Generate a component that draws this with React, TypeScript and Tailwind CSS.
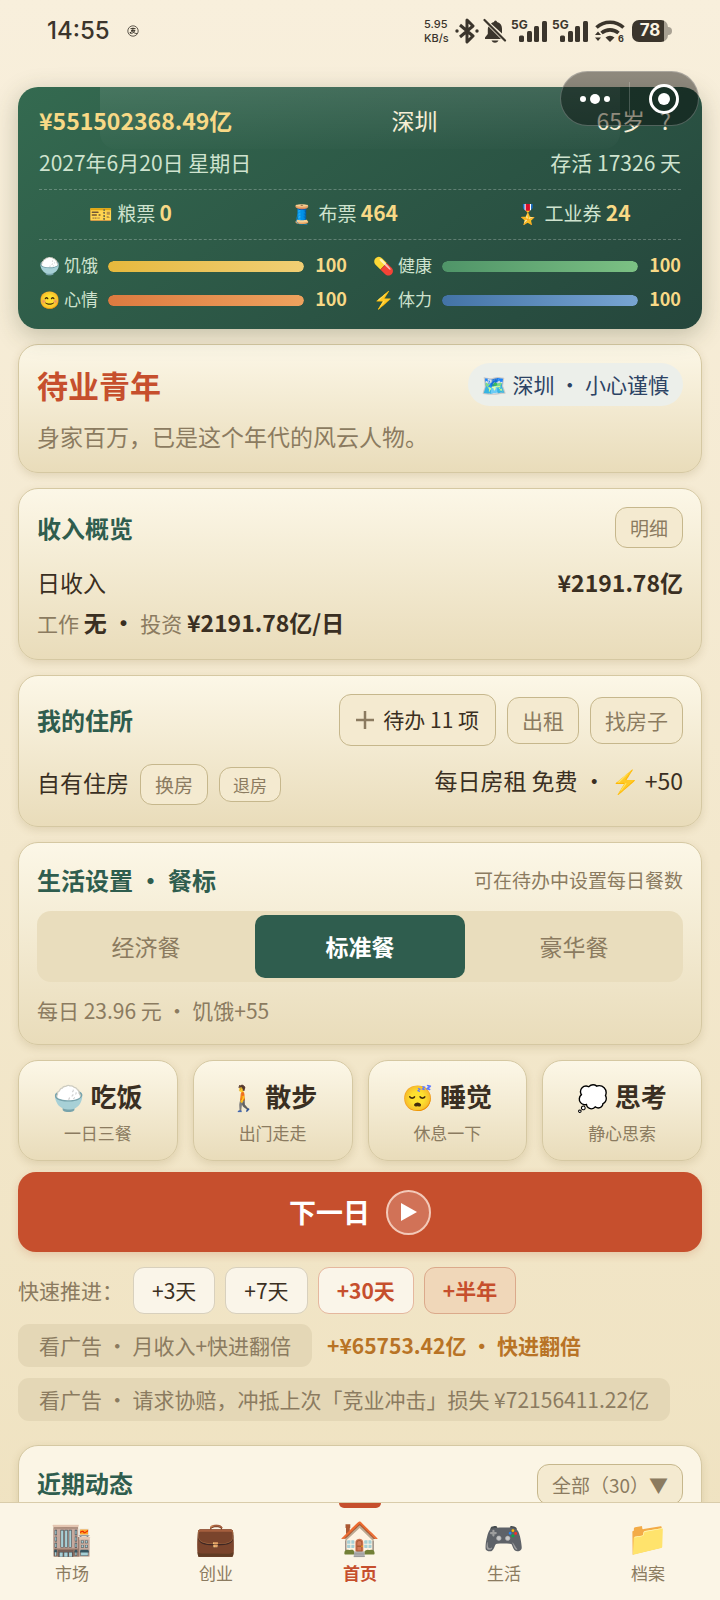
import type { ReactNode } from "react";
import clsx from "clsx";

const tickets = [
  { icon: "🎫", label: "粮票", value: 0 },
  { icon: "🧵", label: "布票", value: 464 },
  { icon: "🎖️", label: "工业券", value: 24 },
];

const stats = [
  { icon: "🍚", label: "饥饿", value: 100, bar: "from-[#e6b93c] to-[#f0cf74]" },
  { icon: "💊", label: "健康", value: 100, bar: "from-[#4f9468] to-[#7cc184]" },
  { icon: "😊", label: "心情", value: 100, bar: "from-[#dc7a40] to-[#eda25e]" },
  { icon: "⚡", label: "体力", value: 100, bar: "from-[#4373a6] to-[#78a5d2]" },
];

const meals = ["经济餐", "标准餐", "豪华餐"];

const actions = [
  { icon: "🍚", label: "吃饭", hint: "一日三餐" },
  { icon: "🚶", label: "散步", hint: "出门走走" },
  { icon: "😴", label: "睡觉", hint: "休息一下" },
  { icon: "💭", label: "思考", hint: "静心思索" },
];

const skips = [
  { label: "+3天", style: "border-[#d8d0bd] bg-[#faf5e9] text-[#3a2f22]" },
  { label: "+7天", style: "border-[#d8d0bd] bg-[#faf5e9] text-[#3a2f22]" },
  { label: "+30天", style: "border-[#e5b79e] bg-[#faf5e9] font-bold text-[#c64f2d]" },
  { label: "+半年", style: "border-[#dba98b] bg-[#f0d7b9] font-bold text-[#c64f2d]" },
];

const tabs = [
  { icon: "🏬", label: "市场" },
  { icon: "💼", label: "创业" },
  { icon: "🏠", label: "首页" },
  { icon: "🎮", label: "生活" },
  { icon: "📁", label: "档案" },
];

function Signal() {
  return (
    <div className="relative h-6 w-9">
      <span className="absolute left-0 top-0 font-[Inter] text-[12px] leading-none font-bold">5G</span>
      <svg viewBox="0 0 36 24" className="h-6 w-9" fill="currentColor">
        <rect x="8" y="16.500" width="5" height="6.500" rx="1.500" />
        <rect x="16" y="12" width="5" height="11" rx="1.500" />
        <rect x="23" y="7" width="5" height="16" rx="1.500" />
        <rect x="31" y="2" width="5" height="21" rx="1.500" />
      </svg>
    </div>
  );
}

function StatusBar() {
  return (
    <header className="flex h-[62px] items-center justify-between pr-[48px] pl-[47px] text-[#3b352c]">
      <div className="flex items-center gap-[17px]">
        <span className="font-[Inter] text-[24px] leading-none font-medium">14:55</span>
        <svg viewBox="0 0 12 12" className="size-3" fill="none" stroke="currentColor" strokeWidth="0.8">
          <circle cx="6" cy="6" r="5.2" />
          <path d="M3.5 3.6h5M4 5.4h4M6 2.6c0 3-1 4.6-3.2 5.2C4 9 7 8 8 5.4M5.5 6c1 1.600 2.500 2.400 4.500 2.800" strokeWidth="1" />
        </svg>
      </div>
      <div className="flex items-center">
        <div className="w-[31px] font-[Inter] text-[11px] leading-[14px] font-medium">
          <div>5.95</div>
          <div>KB/s</div>
        </div>
        <svg viewBox="0 0 24 26" className="h-[26px] w-6" fill="none" stroke="currentColor" strokeWidth="3">
          <path d="M5 7 18 18l-6 6V2l6 6L5 19" strokeLinejoin="round" />
          <circle cx="2" cy="13" r="1.700" fill="currentColor" stroke="none" />
          <circle cx="22" cy="13" r="1.700" fill="currentColor" stroke="none" />
        </svg>
        <svg viewBox="0 0 24 26" className="mr-1 ml-1 h-[26px] w-6" fill="currentColor">
          <path d="M8 5.500c1-.8 2-1.200 3-1.400a1.500 1.500 0 0 1 3 0c3.500.8 5 3.500 5 7v4.500zM5.500 8.500 18 21H2v-1.600l2.800-3.400v-5c0-.9.3-1.800.7-2.500zM8.500 22.500h7c-.8 1.600-2 2.200-3.500 2.200s-2.700-.6-3.500-2.200z" />
          <path d="M1.500 2 22 22.500" stroke="currentColor" strokeWidth="2.200" strokeLinecap="round" />
        </svg>
        <div className="flex gap-[5px]">
          <Signal />
          <Signal />
        </div>
        <svg viewBox="0 0 30 24" className="ml-[7px] h-6 w-[30px]" fill="none" stroke="currentColor" strokeWidth="3.600">
          <path d="M1.500 8.500a20 20 0 0 1 27 0" />
          <path d="M6.500 14a13 13 0 0 1 17 0" />
          <path d="M10.500 18.500a7 7 0 0 1 9 0L15 23z" fill="currentColor" stroke="none" />
          <path d="M0 16l3-3.500L6 16zM0 18.500h6L3 22z" fill="currentColor" stroke="none" />
          <text x="23" y="23" className="font-[Inter] text-[9px] font-bold" fill="currentColor" stroke="none">6</text>
        </svg>
        <div className="ml-[7px] flex items-center">
          <div className="flex h-[22px] w-9 items-center justify-center overflow-hidden rounded-[7px] bg-linear-to-r from-[#3b352c] from-88% to-[#a8a193] to-88% font-[Inter] text-[17px] font-bold text-[#faf3e3]">
            78
          </div>
          <div className="h-2 w-1 rounded-r-full bg-[#a8a193]" />
        </div>
      </div>
    </header>
  );
}

// mini-program menu floating over the header card
function Capsule() {
  return (
    <div className="absolute top-[71px] right-[21px] z-10 flex h-[55px] w-[139px] items-center rounded-full border border-white/25 bg-black/42">
      <button aria-label="更多" className="flex h-full flex-1 items-center justify-center gap-1">
        <span className="size-[6px] rounded-full bg-white" />
        <span className="size-[10px] rounded-full bg-white" />
        <span className="size-[6px] rounded-full bg-white" />
      </button>
      <span className="h-[33px] w-px bg-white/20" />
      <button aria-label="关闭" className="flex h-full flex-1 items-center justify-center">
        <span className="flex size-[30px] items-center justify-center rounded-full border-[3px] border-white">
          <span className="size-3 rounded-full bg-white" />
        </span>
      </button>
    </div>
  );
}

function HeaderCard() {
  return (
    <section className="relative rounded-[20px] bg-linear-145 from-[#346a50] to-[#25463c] px-[21px] pt-[15px] pb-3 text-[#cfe3cf] shadow-[0_6px_24px_rgba(60,70,40,0.28)]">
      <div className="absolute top-0 right-[12%] left-[12%] h-[62px] rounded-b-[16px] bg-linear-to-b from-white/10 to-white/1" />
      <div className="relative flex items-center justify-between text-[23px] leading-9 text-[#f6eed6]">
        <strong className="text-[#f8d986]">¥551502368.49亿</strong>
        <span>深圳</span>
        <span className="flex gap-[15px] pr-[10px]">
          <span>65岁</span>
          <button aria-label="帮助">?</button>
        </span>
      </div>
      <div className="relative mt-1 flex items-center justify-between text-[21px] leading-10">
        <span>2027年6月20日 星期日</span>
        <span>存活 17326 天</span>
      </div>
      <div className="mt-[7px] flex h-[51px] items-center justify-around gap-[18px] border-y border-dashed border-white/25 pb-1 text-[19px]">
        {tickets.map((x) => (
          <span key={x.label}>
            {x.icon} {x.label} <b className="text-[21px] text-[#f8d986]">{x.value}</b>
          </span>
        ))}
      </div>
      <div className="mt-[9px] grid grid-cols-2 gap-x-[26px]">
        {stats.map((s) => (
          <div key={s.label} className="flex h-[34px] items-center text-[17px]">
            <span className="w-[69px] pb-[3px] whitespace-nowrap">
              {s.icon} {s.label}
            </span>
            <div className="h-[11px] flex-1 overflow-hidden rounded-full bg-black/20">
              <div className={clsx("h-full rounded-full bg-linear-to-r", s.bar)} style={{ width: `${s.value}%` }} />
            </div>
            <b className="w-[43px] pb-[3px] text-right text-[18px] text-[#f8d986]">{s.value}</b>
          </div>
        ))}
      </div>
    </section>
  );
}

function Card({ children }: { children: ReactNode }) {
  return (
    <section className="rounded-[20px] border border-[#d5c8a2] bg-linear-to-b from-[#fcf7e7] to-[#e9dcba] p-[18px] shadow-[0_3px_8px_rgba(120,95,40,0.16)]">
      {children}
    </section>
  );
}

function Title({ children }: { children: ReactNode }) {
  return <h2 className="text-[24px] leading-[38px] font-bold text-[#2f5d4e]">{children}</h2>;
}

function Chip({ size, children }: { size: "sm" | "md" | "lg"; children: ReactNode }) {
  return (
    <button
      className={clsx(
        "rounded-[12px] border border-[#c6b78c] bg-[#f4ead0] text-[#8b7b60]",
        size === "sm" && "h-[35px] px-[13px] text-[17px] leading-[33px]",
        size === "md" && "h-[41px] px-[14px] text-[19px] leading-[39px]",
        size === "lg" && "h-[47px] px-[14px] text-[21px] leading-[45px]",
      )}
    >
      {children}
    </button>
  );
}

export default function App() {
  return (
    <div
      lang="zh-CN"
      className="relative flex h-screen flex-col overflow-hidden bg-linear-to-b from-[#f8efdc] to-[#efe2c0] font-['Noto_Sans_CJK_SC','Noto_Color_Emoji',sans-serif] text-[#3a2f22]"
    >
      <StatusBar />
      <Capsule />
      <main className="flex min-h-0 flex-1 flex-col overflow-hidden px-[18px] pt-[25px]">
        <div className="flex shrink-0 flex-col gap-[15px]">
          <HeaderCard />

          <Card>
            <div className="flex items-center justify-between">
              <h1 className="text-[31px] leading-[43px] font-bold text-[#c64f2d]">待业青年</h1>
              <span className="rounded-full bg-[#ecefea] px-[14px] text-[21px] leading-[43px] text-[#2c4364]">🗺️ 深圳 · 小心谨慎</span>
            </div>
            <p className="mt-3 text-[23px] leading-9 text-[#8b7b60]">身家百万，已是这个年代的风云人物。</p>
          </Card>

          <Card>
            <div className="flex items-center justify-between">
              <Title>收入概览</Title>
              <Chip size="md">明细</Chip>
            </div>
            <div className="mt-4 flex justify-between text-[23px] leading-9">
              <span>日收入</span>
              <b>¥2191.78亿</b>
            </div>
            <p className="mt-1 text-[21px] leading-9 text-[#8b7b60]">
              工作 <b className="text-[23px] text-[#3a2f22]">无 · </b>投资 <b className="text-[23px] text-[#3a2f22]">¥2191.78亿/日</b>
            </p>
          </Card>

          <Card>
            <div className="flex items-center justify-between">
              <Title>我的住所</Title>
              <div className="flex items-center gap-[11px]">
                <button className="flex h-[52px] items-center gap-[9px] rounded-[12px] border border-[#c6b78c] bg-[#f4ead0] px-4 text-[21px]">
                  <svg viewBox="0 0 18 18" className="size-[18px] text-[#8b7b60]" stroke="currentColor" strokeWidth="2.500">
                    <path d="M9 0v18M0 9h18" />
                  </svg>
                  待办 11 项
                </button>
                <Chip size="lg">出租</Chip>
                <Chip size="lg">找房子</Chip>
              </div>
            </div>
            <div className="mt-[18px] flex items-start justify-between pb-[3px] text-[23px] leading-8">
              <div className="flex items-center gap-[11px]">
                <span className="self-start leading-9">自有住房</span>
                <Chip size="md">换房</Chip>
                <Chip size="sm">退房</Chip>
              </div>
              <span>每日房租 免费 · ⚡ +50</span>
            </div>
          </Card>

          <Card>
            <div className="flex items-center justify-between">
              <Title>生活设置 · 餐标</Title>
              <span className="text-[19px] text-[#8b7b60]">可在待办中设置每日餐数</span>
            </div>
            <div className="mt-3 grid grid-cols-3 gap-1 rounded-[14px] bg-[#e9ddbd] p-1">
              {meals.map((m, i) => (
                <button
                  key={m}
                  className={clsx("h-[63px] rounded-[10px] text-[23px]", i === 1 ? "bg-[#2f5d4e] font-bold text-white" : "text-[#8b7b60]")}
                >
                  {m}
                </button>
              ))}
            </div>
            <p className="mt-3 text-[21px] leading-8 text-[#8b7b60]">每日 23.96 元 · 饥饿+55</p>
          </Card>

          <div className="grid grid-cols-4 gap-[15px]">
            {actions.map((a) => (
              <button
                key={a.label}
                className="h-[101px] rounded-[20px] border border-[#d5c8a2] bg-linear-to-b from-[#fcf7e7] to-[#e9dcba] pt-1 shadow-[0_3px_8px_rgba(120,95,40,0.16)]"
              >
                <span className="flex items-center justify-center gap-[6px] text-[26px] leading-10 font-bold">
                  <span className="text-[25px]">{a.icon}</span>
                  {a.label}
                </span>
                <span className="block text-[17px] leading-[34px] text-[#8b7b60]">{a.hint}</span>
              </button>
            ))}
          </div>
        </div>

        <button className="mt-[11px] flex h-20 shrink-0 items-center justify-center gap-4 rounded-[18px] bg-[#c64f2d] text-[27px] font-bold text-white shadow-[0_3px_8px_rgba(180,80,40,0.2)]">
          下一日
          <span className="flex size-[45px] items-center justify-center rounded-full border-2 border-[#f3c9b8] bg-white/20">
            <svg viewBox="0 0 16 18" className="h-[18px] w-4" fill="currentColor">
              <path d="M0 0 16 9 0 18z" />
            </svg>
          </span>
        </button>

        <div className="mt-[15px] flex shrink-0 items-center gap-[10px] text-[21px]">
          <span className="text-[#8b7b60]">快速推进：</span>
          {skips.map((s) => (
            <button key={s.label} className={clsx("h-[47px] rounded-[11px] border px-[18px]", s.style)}>
              {s.label}
            </button>
          ))}
        </div>
        <div className="mt-[10px] flex shrink-0 items-center gap-[15px] text-[21px]">
          <button className="h-[43px] rounded-[11px] bg-[#e4d7b6] px-[21px] text-[#8b7b60]">看广告 · 月收入+快进翻倍</button>
          <b className="text-[#b87325]">+¥65753.42亿 · 快进翻倍</b>
        </div>
        <div className="mt-[11px] shrink-0 text-[21px]">
          <button className="h-[43px] rounded-[11px] bg-[#e4d7b6] px-[21px] text-[#8b7b60]">
            看广告 · 请求协赔，冲抵上次「竞业冲击」损失 ¥72156411.22亿
          </button>
        </div>

        <section className="mt-6 shrink-0 rounded-[20px] border border-[#d5c8a2] bg-[#fbf5e5] p-[18px] pb-20 shadow-[0_3px_8px_rgba(120,95,40,0.16)]">
          <div className="flex items-start justify-between">
            <Title>近期动态</Title>
            <Chip size="md">全部（30）▼</Chip>
          </div>
        </section>
      </main>

      <nav className="grid h-[98px] shrink-0 grid-cols-5 border-t border-[#d9ccaa] bg-[#fbf5e6]">
        {tabs.map((tab, i) => (
          <a
            key={tab.label}
            href="#"
            className={clsx("relative flex flex-col items-center gap-[2px] pt-[10px]", i === 2 ? "font-bold text-[#c64f2d]" : "text-[#8b7b60]")}
          >
            {i === 2 && <span className="absolute top-0 h-[5px] w-[42px] rounded-b-[5px] bg-[#c64f2d]" />}
            <span className="text-[33px] leading-[46px]">{tab.icon}</span>
            <span className="text-[17px] leading-6">{tab.label}</span>
          </a>
        ))}
      </nav>
    </div>
  );
}
